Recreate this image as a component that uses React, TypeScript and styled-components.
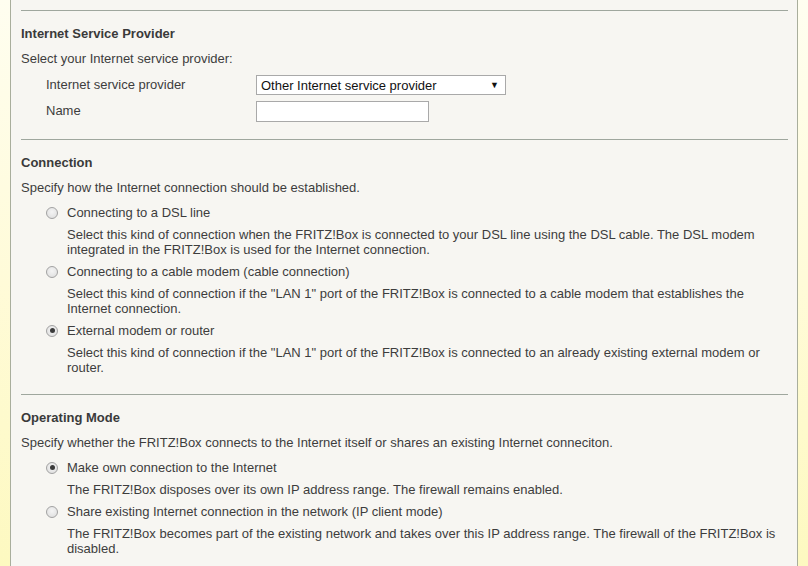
import React from "react";
import styled, { createGlobalStyle } from "styled-components";

const Global = createGlobalStyle`
  html, body { margin: 0; padding: 0; height: 100%; overflow: hidden; }
  body { font-family: "Liberation Sans", Arial, sans-serif; font-size: 13px; color: #3d3d3d; }
  #root { height: 100%; }
`;

const Page = styled.div`
  display: flex;
  height: 566px;
  background: linear-gradient(180deg, #fffef0 0%, #fffbd8 50%, #fdf9c0 100%);
`;

const Gutter = styled.div<{ $w: number }>`
  width: ${(p) => p.$w}px;
  flex: none;
`;

const Panel = styled.main`
  flex: 1;
  background: #f7f6f2;
  border-left: 1px solid #a9ae9c;
  border-right: 1px solid #a9ae9c;
  padding: 10px 9px 0 10px;
  overflow: hidden;
`;

const Section = styled.section`
  border-top: 1px solid #9fa79e;
  padding: 13px 0 15px 0;
`;

const Heading = styled.h2`
  margin: 0 0 5px 0;
  font-size: 13px;
  font-weight: bold;
  line-height: 20px;
  color: #3a3a3a;
`;

const Para = styled.p`
  margin: 0;
  line-height: 20px;
`;

const FormGrid = styled.div`
  display: grid;
  grid-template-columns: 210px auto;
  grid-auto-rows: 26px;
  align-items: center;
  padding-left: 25px;
  margin-top: 3px;
`;

const Label = styled.span`
  line-height: 20px;
`;

const SelectBox = styled.div`
  width: 250px;
  height: 20px;
  box-sizing: border-box;
  background: #fff;
  border: 1px solid #a9a9a9;
  display: flex;
  align-items: center;
  justify-content: space-between;
  padding: 0 6px 0 4px;
  color: #111;
  font-size: 13px;
`;

const Arrow = styled.span`
  font-size: 9px;
  color: #111;
`;

const TextInput = styled.input`
  width: 173px;
  height: 21px;
  box-sizing: border-box;
  background: #fff;
  border: 1px solid #a9a9a9;
  margin: 0;
  padding: 0 4px;
`;

const Options = styled.div`
  padding-left: 25px;
  margin-top: 4px;
`;

const OptionRow = styled.div`
  display: flex;
  align-items: center;
  gap: 9px;
  height: 21px;
`;

const Radio = styled.span<{ $checked?: boolean }>`
  width: 12px;
  height: 12px;
  border-radius: 50%;
  box-sizing: border-box;
  border: 1px solid #a2a2a2;
  background: radial-gradient(circle at 50% 40%, #f4f4f4 0%, #dcdcdc 100%);
  display: flex;
  align-items: center;
  justify-content: center;
  flex: none;
  &::after {
    content: "";
    display: ${(p) => (p.$checked ? "block" : "none")};
    width: 5px;
    height: 5px;
    border-radius: 50%;
    background: #3a3a3a;
  }
`;

const Desc = styled.p`
  margin: 0;
  padding: 4px 0 4px 21px;
  line-height: 15px;
`;

type Opt = { label: string; desc: string; checked?: boolean };

const connOpts: Opt[] = [
  {
    label: "Connecting to a DSL line",
    desc: "Select this kind of connection when the FRITZ!Box is connected to your DSL line using the DSL cable. The DSL modem integrated in the FRITZ!Box is used for the Internet connection.",
  },
  {
    label: "Connecting to a cable modem (cable connection)",
    desc: 'Select this kind of connection if the "LAN 1" port of the FRITZ!Box is connected to a cable modem that establishes the Internet connection.',
  },
  {
    label: "External modem or router",
    desc: 'Select this kind of connection if the "LAN 1" port of the FRITZ!Box is connected to an already existing external modem or router.',
    checked: true,
  },
];

const modeOpts: Opt[] = [
  {
    label: "Make own connection to the Internet",
    desc: "The FRITZ!Box disposes over its own IP address range. The firewall remains enabled.",
    checked: true,
  },
  {
    label: "Share existing Internet connection in the network (IP client mode)",
    desc: "The FRITZ!Box becomes part of the existing network and takes over this IP address range. The firewall of the FRITZ!Box is disabled.",
  },
];

const OptionList = ({ opts }: { opts: Opt[] }) => (
  <Options>
    {opts.map((o) => (
      <div key={o.label}>
        <OptionRow>
          <Radio $checked={o.checked} />
          <span>{o.label}</span>
        </OptionRow>
        <Desc>{o.desc}</Desc>
      </div>
    ))}
  </Options>
);

export default function App() {
  return (
    <>
      <Global />
      <Page>
        <Gutter $w={10} />
        <Panel>
          <Section>
            <Heading>Internet Service Provider</Heading>
            <Para>Select your Internet service provider:</Para>
            <FormGrid>
              <Label>Internet service provider</Label>
              <SelectBox>
                <span>Other Internet service provider</span>
                <Arrow>▼</Arrow>
              </SelectBox>
              <Label>Name</Label>
              <TextInput type="text" />
            </FormGrid>
          </Section>
          <Section>
            <Heading>Connection</Heading>
            <Para>Specify how the Internet connection should be established.</Para>
            <OptionList opts={connOpts} />
          </Section>
          <Section>
            <Heading>Operating Mode</Heading>
            <Para>
              Specify whether the FRITZ!Box connects to the Internet itself or shares an existing Internet conneciton.
            </Para>
            <OptionList opts={modeOpts} />
          </Section>
        </Panel>
        <Gutter $w={10} />
      </Page>
    </>
  );
}
